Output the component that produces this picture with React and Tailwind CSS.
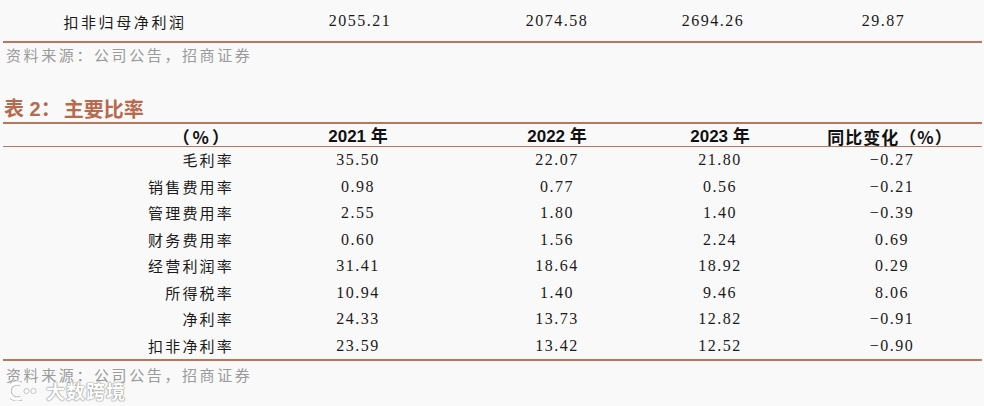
import React from "react";

const rows = [
  ["毛利率", "35.50", "22.07", "21.80", "-0.27"],
  ["销售费用率", "0.98", "0.77", "0.56", "-0.21"],
  ["管理费用率", "2.55", "1.80", "1.40", "-0.39"],
  ["财务费用率", "0.60", "1.56", "2.24", "0.69"],
  ["经营利润率", "31.41", "18.64", "18.92", "0.29"],
  ["所得税率", "10.94", "1.40", "9.46", "8.06"],
  ["净利率", "24.33", "13.73", "12.82", "-0.91"],
  ["扣非净利率", "23.59", "13.42", "12.52", "-0.90"],
];

const cjk = { fontFamily: '"Noto Sans CJK SC", sans-serif' };
const num = { fontFamily: '"Liberation Serif", "Noto Sans CJK SC", serif' };
const head = { fontFamily: '"Liberation Sans", "Noto Sans CJK SC", sans-serif' };

function Num({ children }) {
  return (
    <div className="flex items-center justify-center text-[16px] tracking-[1.5px] text-[#1a1a1a]" style={num}>
      {children}
    </div>
  );
}

function Source() {
  return (
    <div className="pl-[6px] text-[15px] tracking-[2.6px] text-[#9a9a9a] leading-[17px]" style={cjk}>
      资料来源：公司公告，招商证券
    </div>
  );
}

export default function App() {
  return (
    <div className="relative w-[984px] h-[406px] bg-[#f9f9f9] overflow-hidden">
      {/* top table remainder */}
      <div className="ml-[3px] w-[979px]">
        <div className="grid grid-cols-[244px_226px_168px_144px_197px] h-[43px] items-end pb-[8px] border-b-2 border-[#b8765d]">
          <div className="flex justify-center text-[15px] tracking-[2.6px] text-[#1a1a1a]" style={cjk}>
            扣非归母净利润
          </div>
          <Num>2055.21</Num>
          <Num>2074.58</Num>
          <Num>2694.26</Num>
          <Num>29.87</Num>
        </div>
      </div>
      <div className="mt-[3px]">
        <Source />
      </div>

      {/* Title */}
      <div className="mt-[35px] ml-[4px] flex items-center h-[22px] text-[20px] font-bold text-[#b86a4d]" style={head}>
        <span>表 2：</span>
        <span className="ml-[3px]" style={cjk}>主要比率</span>
      </div>

      {/* table */}
      <div className="ml-[3px] w-[979px] mt-[2px] border-t-2 border-[#b8765d]">
        <div className="grid grid-cols-[237px_236px_162px_164px_180px] h-[23px] items-center border-b border-[#b8765d] text-[17px] font-bold text-[#111]" style={head}>
          <div className="text-right pr-[8px] tracking-[3px]" style={cjk}>（%）</div>
          <div className="text-center">2021 年</div>
          <div className="text-center">2022 年</div>
          <div className="text-center">2023 年</div>
          <div className="text-center pr-[4px] tracking-[1px]" style={cjk}>同比变化（%）</div>
        </div>
        <div className="border-b-2 border-[#b8765d]">
          {rows.map((r) => (
            <div key={r[0]} className="grid grid-cols-[237px_236px_162px_164px_180px] h-[26.5px] items-center">
              <div className="text-right pr-[6px] text-[15px] tracking-[2.2px] text-[#1a1a1a]" style={cjk}>
                {r[0]}
              </div>
              <Num>{r[1]}</Num>
              <Num>{r[2]}</Num>
              <Num>{r[3]}</Num>
              <Num>{r[4].replace("-", "−")}</Num>
            </div>
          ))}
        </div>
      </div>
      <div className="mt-[5px]">
        <Source />
      </div>

      {/* watermark */}
      <div className="absolute left-[10px] top-[380px] h-[22px] flex items-center gap-[6px]">
        <svg width="30" height="20" viewBox="0 0 30 20">
          <path d="M11 3 A8 8 0 1 0 11 17" fill="none" stroke="#b4b4b4" strokeWidth="5" />
          <path d="M11 3 A8 8 0 1 0 11 17" fill="none" stroke="#ffffff" strokeWidth="3.5" />
          <circle cx="16.5" cy="10" r="2.6" fill="#fff" stroke="#b4b4b4" strokeWidth="0.8" />
          <circle cx="23.5" cy="10" r="2.6" fill="#fff" stroke="#b4b4b4" strokeWidth="0.8" />
        </svg>
        <span
          className="text-[19px] leading-[22px] font-bold text-white tracking-[1px]"
          style={{ ...cjk, textShadow: "0 0 1px #8a8a8a, 0 0 1px #8a8a8a, 0 0 2px #aaaaaa" }}
        >
          大数跨境
        </span>
      </div>
    </div>
  );
}
